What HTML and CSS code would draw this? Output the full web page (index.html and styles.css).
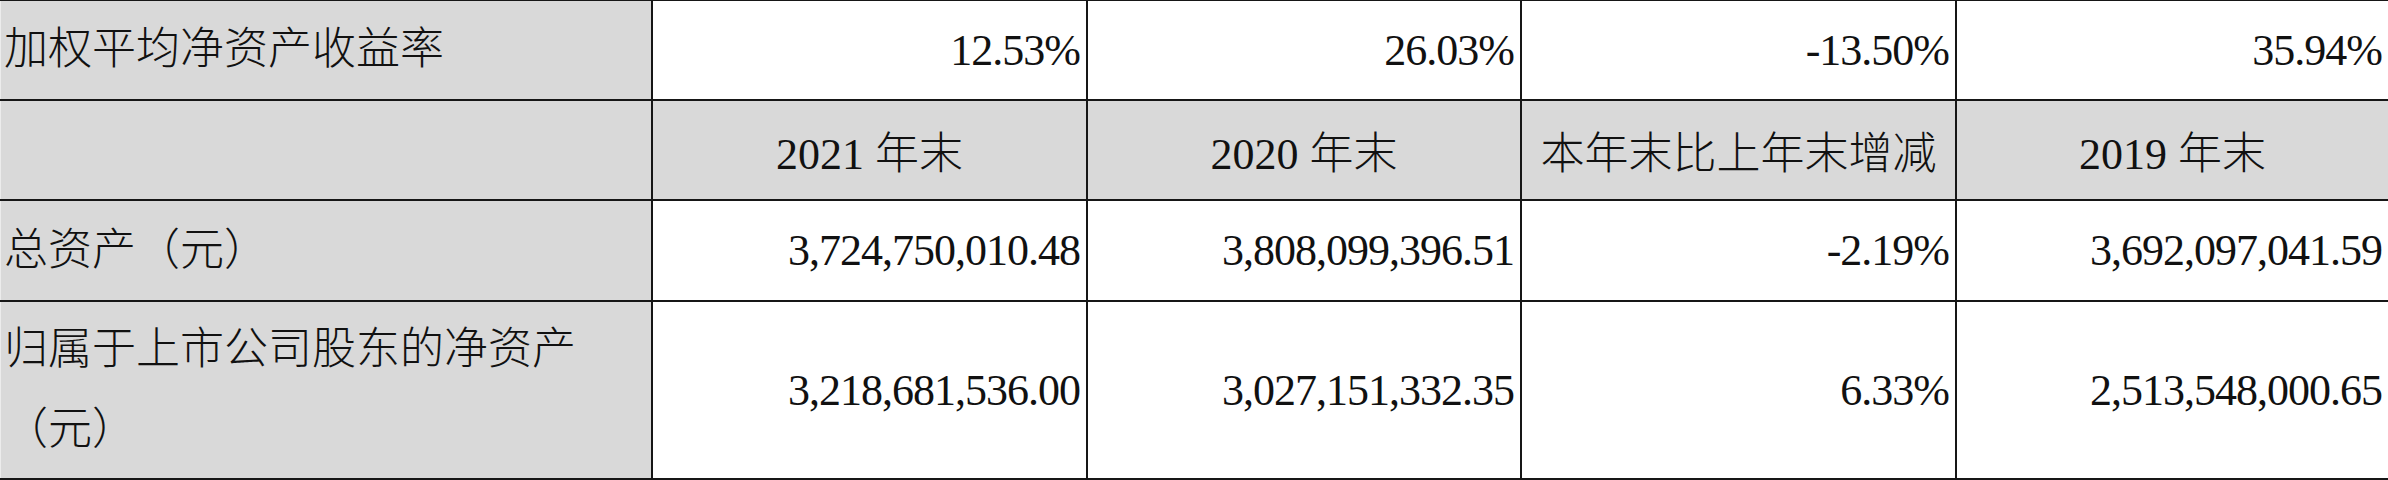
FILE: index.html
```html
<!DOCTYPE html>
<html lang="zh-CN">
<head>
<meta charset="utf-8">
<title>财务指标</title>
<link rel="stylesheet" href="styles.css">
</head>
<body>
<div class="sheet">
  <div class="cell label">加权平均净资产收益率</div>
  <div class="cell num">12.53%</div>
  <div class="cell num">26.03%</div>
  <div class="cell num">-13.50%</div>
  <div class="cell num">35.94%</div>

  <div class="cell label"></div>
  <div class="cell head">2021 年末</div>
  <div class="cell head">2020 年末</div>
  <div class="cell head">本年末比上年末增减</div>
  <div class="cell head">2019 年末</div>

  <div class="cell label">总资产（元）</div>
  <div class="cell num">3,724,750,010.48</div>
  <div class="cell num">3,808,099,396.51</div>
  <div class="cell num">-2.19%</div>
  <div class="cell num">3,692,097,041.59</div>

  <div class="cell label multi">归属于上市公司股东的净资产<br>（元）</div>
  <div class="cell num">3,218,681,536.00</div>
  <div class="cell num">3,027,151,332.35</div>
  <div class="cell num">6.33%</div>
  <div class="cell num">2,513,548,000.65</div>
</div>
</body>
</html>
```

FILE: styles.css
```css
html, body {
  margin: 0;
  padding: 0;
  background: #ffffff;
}

.sheet {
  display: grid;
  grid-template-columns: 651px 433px 432px 433px 1fr;
  grid-template-rows: 98px 98px 99px 176px;
  gap: 2px;
  padding: 1px 0 2px 0;
  width: 2388px;
  background: #161616;
  font-family: "Liberation Serif", "Noto Sans CJK SC", serif;
  font-size: 44px;
  font-weight: 300;
  color: #111111;
}

.cell {
  background: #ffffff;
  display: flex;
  align-items: center;
  white-space: nowrap;
}

.label {
  background: #d9d9d9;
  padding-left: 4px;
  box-shadow: inset 5px 0 0 -4px #ececec;
  line-height: 80px;
}

.multi {
  white-space: normal;
}

.head {
  background: #d9d9d9;
  justify-content: center;
}

.num {
  justify-content: flex-end;
  padding-right: 6px;
  letter-spacing: -1px;
}
```
